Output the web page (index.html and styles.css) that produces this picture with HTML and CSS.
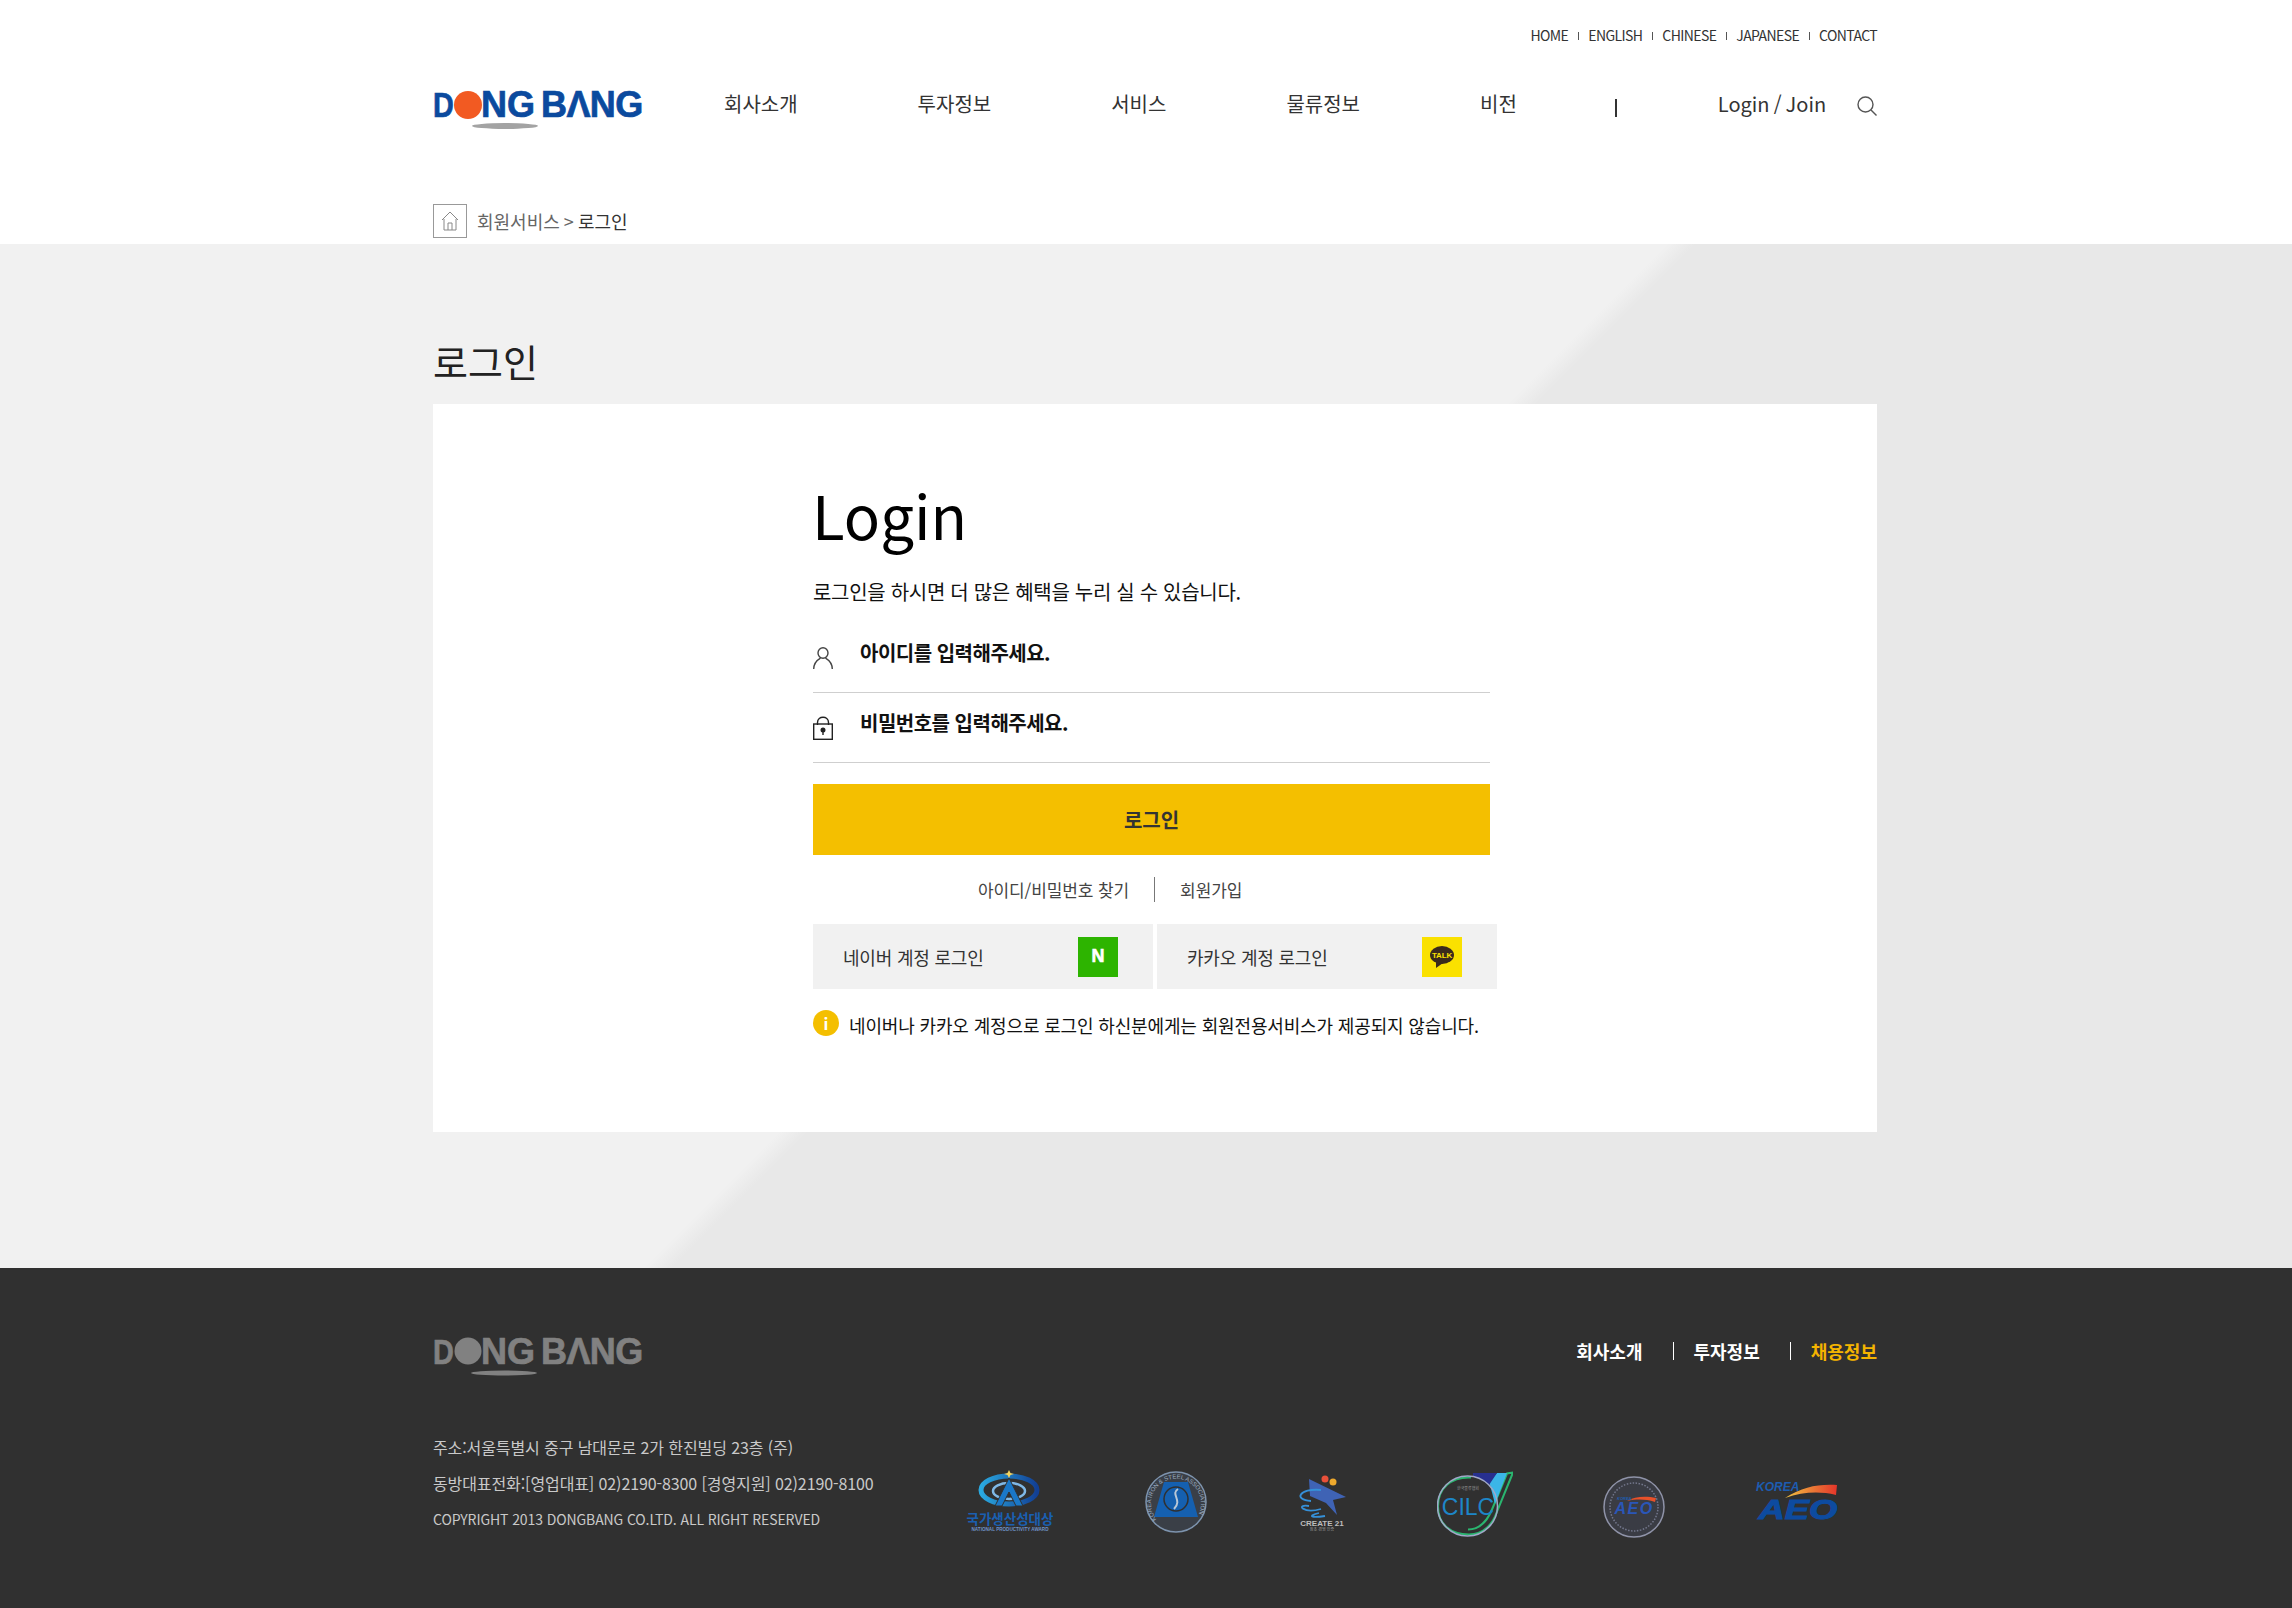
FILE: index.html
```html
<!DOCTYPE html>
<html lang="ko">
<head>
<meta charset="UTF-8">
<meta name="viewport" content="width=device-width, initial-scale=1.0">
<title>DONGBANG 로그인</title>
<link rel="stylesheet" href="styles.css">
</head>
<body>

<header class="site-header">
    <div class="wrap">
        <ul class="util-menu">
            <li>HOME</li>
            <li>ENGLISH</li>
            <li>CHINESE</li>
            <li>JAPANESE</li>
            <li>CONTACT</li>
        </ul>

        <div class="nav-row">
            <svg class="logo logo-color" width="210" height="50" viewBox="0 -10 210 50">
                <text transform="translate(0 26) scale(0.8 1)">D</text>
                <circle class="logo-dot" cx="35" cy="14" r="14"/>
                <text x="48" y="26">NG</text>
                <text x="108" y="26" letter-spacing="-0.6">BΛNG</text>
                <ellipse class="logo-shadow" cx="72" cy="35" rx="33" ry="3"/>
            </svg>

            <nav class="main-nav">
                <a href="#">회사소개</a>
                <a href="#">투자정보</a>
                <a href="#">서비스</a>
                <a href="#">물류정보</a>
                <a href="#">비전</a>
            </nav>

            <span class="nav-bar"></span>
            <a class="login-link" href="#">Login / Join</a>
            <svg class="search-icon" width="20" height="20" viewBox="0 0 20 20">
                <circle cx="8.5" cy="8.5" r="7.5"/>
                <path d="M14 14 L19.5 19.5"/>
            </svg>
        </div>

        <div class="breadcrumb">
            <span class="home-box">
                <svg width="18" height="20" viewBox="0 0 18 20">
                    <path d="M1 9 L9 1 L17 9 M3 8 V19 H15 V8 M7 19 V12 H11 V19"/>
                </svg>
            </span>
            <span class="crumb">회원서비스 &gt; </span><span class="crumb-now">로그인</span>
        </div>
    </div>
</header>

<main class="page-main">
    <div class="wrap">
        <h2 class="page-title">로그인</h2>

        <section class="login-card">
            <h1 class="login-title">Login</h1>
            <p class="login-sub">로그인을 하시면 더 많은 혜택을 누리 실 수 있습니다.</p>

            <div class="field">
                <svg class="field-icon" width="20" height="22" viewBox="0 0 20 22">
                    <ellipse cx="10" cy="6" rx="5" ry="5.2"/>
                    <path d="M0.7 22 C0.7 15 5 12.5 7.5 11 M19.3 22 C19.3 15 15 12.5 12.5 11"/>
                </svg>
                <span>아이디를 입력해주세요.</span>
            </div>
            <div class="field field-pw">
                <svg class="field-icon" width="20" height="24" viewBox="0 0 20 24">
                    <path d="M4.5 9 V6.5 C4.5 -0.5 15.5 -0.5 15.5 6.5 V9"/>
                    <rect x="0.7" y="8" width="18.6" height="15.3"/>
                    <circle class="key-dot" cx="10" cy="14" r="1.8"/>
                    <path d="M10 14 V19"/>
                </svg>
                <span>비밀번호를 입력해주세요.</span>
            </div>

            <button class="login-btn" type="button">로그인</button>

            <div class="find-links">
                <a href="#">아이디/비밀번호 찾기</a>
                <span class="find-bar"></span>
                <a href="#">회원가입</a>
            </div>

            <div class="social-row">
                <a class="social-btn" href="#">
                    <span>네이버 계정 로그인</span>
                    <span class="social-icon naver">N</span>
                </a>
                <a class="social-btn" href="#">
                    <span>카카오 계정 로그인</span>
                    <span class="social-icon kakao">
                        <svg width="24" height="22" viewBox="0 0 24 22">
                            <ellipse cx="12" cy="9" rx="12" ry="9" fill="#3a2a1c"/>
                            <path d="M6 15 L6 22 L13 17 Z" fill="#3a2a1c"/>
                            <text x="12" y="12" text-anchor="middle" class="talk">TALK</text>
                        </svg>
                    </span>
                </a>
            </div>

            <div class="notice">
                <span class="notice-icon">i</span>
                <p>네이버나 카카오 계정으로 로그인 하신분에게는 회원전용서비스가 제공되지 않습니다.</p>
            </div>
        </section>
    </div>
</main>

<footer class="site-footer">
    <div class="wrap">
        <div class="footer-top">
            <svg class="logo logo-gray" width="210" height="50" viewBox="0 -10 210 50">
                <text transform="translate(0 26) scale(0.8 1)">D</text>
                <circle class="logo-dot" cx="35" cy="13" r="13.5"/>
                <text x="48" y="26">NG</text>
                <text x="108" y="26" letter-spacing="-0.6">BΛNG</text>
                <ellipse class="logo-shadow" cx="71" cy="35" rx="33" ry="2.5"/>
            </svg>
            <ul class="footer-links">
                <li><a href="#">회사소개</a></li>
                <li><a href="#">투자정보</a></li>
                <li><a class="recruit" href="#">채용정보</a></li>
            </ul>
        </div>

        <div class="footer-bottom">
            <address class="footer-info">
                <p>주소:서울특별시 중구 남대문로 2가 한진빌딩 23층 (주)</p>
                <p>동방대표전화:[영업대표] 02)2190-8300 [경영지원] 02)2190-8100</p>
                <p class="copy">COPYRIGHT 2013 DONGBANG CO.LTD. ALL RIGHT RESERVED</p>
            </address>

            <div class="cert-row">
                <svg width="90" height="70" viewBox="0 0 90 70">
                    <defs>
                        <linearGradient id="awardBlue" x1="0" x2="1" y1="0" y2="0">
                            <stop offset="0" stop-color="#2aa9e0"/>
                            <stop offset="1" stop-color="#123f94"/>
                        </linearGradient>
                    </defs>
                    <ellipse cx="44" cy="20" rx="28" ry="14" fill="none" stroke="url(#awardBlue)" stroke-width="5"/>
                    <ellipse cx="44" cy="21" rx="16" ry="8" fill="none" stroke="#7fb8e6" stroke-width="2.5"/>
                    <path d="M44 8 L30 36 H37 L44 22 L51 36 H58 Z" fill="#1a78c8" stroke="#303030" stroke-width="1"/>
                    <path d="M44 0 L45.5 3 L49 4 L45.5 5 L44 8 L42.5 5 L39 4 L42.5 3 Z" fill="#f4d35e"/>
                    <text x="45" y="54" text-anchor="middle" class="cert-ko">국가생산성대상</text>
                    <text x="45" y="61" text-anchor="middle" class="cert-en">NATIONAL PRODUCTIVITY AWARD</text>
                </svg>

                <svg width="62" height="70" viewBox="0 0 62 70">
                    <circle cx="31" cy="32" r="30" fill="#3a3f47" stroke="#7d93ad" stroke-width="1.5"/>
                    <path d="M19 12 H43 L53 47 H9 Z" fill="#1560b0"/>
                    <circle cx="31" cy="29" r="12" fill="#1560b0" stroke="#303030" stroke-width="1.5"/>
                    <path d="M33 19 C25 24 38 30 29 39" fill="none" stroke="#b9c7d6" stroke-width="2"/>
                    <path id="certArc" d="M14 52 A25 25 0 1 1 48 52" fill="none"/>
                    <text class="cert-arc"><textPath href="#certArc" startOffset="3%">KOREA IRON &amp; STEEL ASSOCIATION</textPath></text>
                </svg>

                <svg width="50" height="70" viewBox="0 0 50 70">
                    <circle cx="28" cy="9" r="3.5" fill="#e8503a"/>
                    <circle cx="36" cy="12" r="3.5" fill="#eea92d"/>
                    <path d="M12 9 L49 27 L36 30 L40 45 L29 33 L13 26 Z" fill="#3f63b5"/>
                    <path d="M24 20 C2 18 -4 30 14 31 M12 36 C-2 34 6 44 24 39 M22 43 C10 46 14 48 28 46" fill="none" stroke="#3590d8" stroke-width="1.8"/>
                    <text x="25" y="56" text-anchor="middle" class="cert-create">CREATE 21</text>
                    <text x="25" y="61" text-anchor="middle" class="cert-tiny">창조 경영 인증</text>
                </svg>

                <svg width="76" height="70" viewBox="0 0 76 70">
                    <path d="M34 7.500 C14 6.500 1 18.500 1 36.500 C1 54.500 14 64.500 32 64.500 C47 64.500 56 53.500 60 41.500 L76 2.500 L70 3.500 L55 39.500 C50 51.500 43 59.500 31 59.500" fill="none" stroke="#2ab56f" stroke-width="2"/>
                    <path d="M60 3 H70 L58 34 C55 22 53 15 52 12 Z" fill="#3bb6e8"/>
                    <path d="M36 3 H60 L52 15 C47 10 42 7 36 7 Z" fill="#27308f"/>
                    <circle cx="30.500" cy="36" r="30" fill="none" stroke="#a0a8c8" stroke-width="1.500"/>
                    <text x="31" y="20" text-anchor="middle" class="cert-tiny">한국물류협회</text>
                    <text x="31" y="45" text-anchor="middle" class="cert-cilc">CILC</text>
                </svg>

                <svg width="62" height="70" viewBox="0 0 62 70">
                    <circle cx="31" cy="37" r="30" fill="#3a3c44" stroke="#8f93a8" stroke-width="1.5"/>
                    <circle cx="31" cy="37" r="24" fill="none" stroke="#73778c" stroke-width="1.500" stroke-dasharray="1.500 1.500"/>
                    <path d="M24 31 C32 26 44 26 53 28 L52 32 C42 29 34 29 24 31 Z" fill="#e8512a"/>
                    <text x="31" y="44" text-anchor="middle" class="cert-aeo small">AEO</text>
                    <text x="14" y="30" class="cert-korea small">KOREA</text>
                </svg>

                <svg width="86" height="70" viewBox="0 0 86 70">
                    <defs>
                        <linearGradient id="aeoSwoosh" x1="0" x2="1" y1="0" y2="0">
                            <stop offset="0" stop-color="#f2c542"/>
                            <stop offset="1" stop-color="#e4352a"/>
                        </linearGradient>
                    </defs>
                    <path d="M30 28 C48 17 62 14 82 15 L81 25 C64 21 48 22 30 28 Z" fill="url(#aeoSwoosh)"/>
                    <text x="1" y="21" class="cert-korea">KOREA</text>
                    <text transform="translate(43 49) scale(1.3 1)" text-anchor="middle" class="cert-aeo">AEO</text>
                </svg>
            </div>
        </div>
    </div>
</footer>

</body>
</html>
```

FILE: styles.css
```css
* {
    box-sizing: border-box;
}

html, body {
    margin: 0;
    padding: 0;
}

body {
    font-family: "Noto Sans CJK KR", "Noto Sans", sans-serif;
    color: #333;
    background-color: #fff;
}

a {
    color: inherit;
    text-decoration: none;
}

ul {
    list-style-type: none;
    margin: 0;
    padding: 0;
}

p {
    margin: 0;
}

svg {
    display: block;
}

.wrap {
    width: 1444px;
    margin-left: 433px;
}

/* header */
.site-header {
    height: 244px;
}

.util-menu {
    display: flex;
    justify-content: flex-end;
    align-items: center;
    padding-top: 24px;
    height: 46px;
    font-size: 14px;
    line-height: 22px;
    letter-spacing: -0.6px;
    color: #333;
}

.util-menu li + li {
    margin-left: 10px;
    padding-left: 10px;
    background: linear-gradient(#555, #555) left 8px / 1px 8px no-repeat;
}

.nav-row {
    display: flex;
    align-items: flex-start;
    height: 158px;
    padding-top: 45px;
}

.logo {
    margin-top: -10px;
}

.logo text {
    font-family: "Liberation Sans", sans-serif;
    font-weight: 700;
    font-size: 36px;
    stroke-width: 0.7;
}

.logo-color text {
    fill: #0b4a9e;
    stroke: #0b4a9e;
}

.logo-color .logo-dot {
    fill: #f25a22;
}

.logo-color .logo-shadow {
    fill: #a3a3a3;
}

.logo-gray text {
    stroke: #818181;
}

.logo-gray text,
.logo-gray .logo-dot,
.logo-gray .logo-shadow {
    fill: #818181;
}

.main-nav {
    display: flex;
    gap: 120px;
    margin-left: 81px;
    margin-top: -2px;
    font-size: 20px;
    line-height: 30px;
    color: #333;
}

.nav-bar {
    width: 2px;
    height: 18px;
    margin: 8px 0 0 98px;
    background-color: #333;
}

.login-link {
    margin-left: 101px;
    margin-top: -2px;
    font-size: 20px;
    line-height: 30px;
    word-spacing: -1.5px;
    color: #333;
}

.search-icon {
    margin: 5px 0 0 auto;
    fill: none;
    stroke: #555;
    stroke-width: 1.4;
}

.breadcrumb {
    display: flex;
    align-items: center;
    font-size: 18px;
    white-space: pre;
    word-spacing: -1px;
}

.home-box {
    display: flex;
    align-items: center;
    justify-content: center;
    width: 34px;
    height: 34px;
    margin-right: 10px;
    border: 1px solid #999;
}

.home-box svg {
    fill: none;
    stroke: #888;
    stroke-width: 1;
}

.crumb {
    color: #666;
}

.crumb-now {
    color: #333;
}

/* main */
.page-main {
    padding-bottom: 136px;
    background: linear-gradient(135deg, #f1f1f1 1179px, #e8e8e8 1199px);
}

.page-title {
    margin: 0;
    padding-top: 87px;
    height: 160px;
    font-size: 38px;
    line-height: 60px;
    font-weight: 400;
    color: #222;
}

.login-card {
    height: 728px;
    padding: 70px 0 0 380px;
    background-color: #fff;
    color: #111;
}

.login-title {
    margin: 0;
    margin-left: -1px;
    font-size: 60px;
    line-height: 80px;
    font-weight: 400;
    color: #000;
}

.login-sub {
    margin-top: 23px;
    font-size: 20px;
    line-height: 30px;
    letter-spacing: -0.3px;
}

.field {
    display: flex;
    align-items: flex-start;
    gap: 27px;
    width: 677px;
    height: 70px;
    margin-top: 16px;
    padding-top: 15px;
    border-bottom: 1px solid #cfcfcf;
    font-size: 20px;
    line-height: 30px;
    font-weight: 700;
    letter-spacing: -0.5px;
}

.field-pw {
    margin-top: 0;
}

.field-icon {
    margin-top: 9px;
    fill: none;
    stroke: #444;
    stroke-width: 1.4;
}

.field-pw .field-icon {
    stroke: #222;
    margin-top: 8px;
}

.key-dot {
    fill: #222;
}

.login-btn {
    display: block;
    width: 677px;
    height: 71px;
    margin-top: 21px;
    border: 0;
    background-color: #f4bf00;
    font-family: inherit;
    font-size: 20px;
    font-weight: 700;
    color: #333;
}

.find-links {
    display: flex;
    align-items: center;
    gap: 25px;
    width: 677px;
    height: 25px;
    margin-top: 22px;
    padding-left: 165px;
    font-size: 17px;
    letter-spacing: -0.1px;
    color: #444;
}

.find-bar {
    width: 1px;
    height: 25px;
    background-color: #777;
}

.social-row {
    display: flex;
    gap: 4px;
    margin-top: 22px;
}

.social-btn {
    display: flex;
    justify-content: space-between;
    align-items: center;
    width: 340px;
    height: 65px;
    padding: 0 35px 0 30px;
    background-color: #f1f1f1;
    font-size: 18px;
    letter-spacing: -0.2px;
    color: #333;
}

.social-icon {
    display: flex;
    align-items: center;
    justify-content: center;
    width: 40px;
    height: 40px;
}

.naver {
    background-color: #2db400;
    color: #fff;
    font-family: "Liberation Sans", sans-serif;
    font-size: 18px;
    font-weight: 700;
    -webkit-text-stroke: 0.6px #fff;
}

.kakao {
    background-color: #fae100;
}

.talk {
    font-family: "Liberation Sans", sans-serif;
    font-size: 8px;
    font-weight: 700;
    fill: #fae100;
}

.notice {
    display: flex;
    align-items: flex-start;
    gap: 10px;
    margin-top: 21px;
}

.notice-icon {
    width: 26px;
    height: 26px;
    border-radius: 50%;
    background-color: #f4bf00;
    color: #fff;
    font-size: 16px;
    line-height: 26px;
    font-weight: 700;
    text-align: center;
}

.notice p {
    font-size: 18px;
    line-height: 30px;
    letter-spacing: -0.15px;
    color: #111;
}

/* footer */
.site-footer {
    height: 340px;
    padding-top: 70px;
    background-color: #303030;
}

.footer-top {
    display: flex;
    justify-content: space-between;
    align-items: flex-start;
    height: 91px;
}

.footer-links {
    display: flex;
    margin-top: -1px;
    font-size: 18px;
    line-height: 28px;
    font-weight: 700;
    color: #fff;
}

.footer-links li + li {
    margin-left: 30px;
    padding-left: 21px;
    background: linear-gradient(#fff, #fff) left 5px / 1px 18px no-repeat;
}

.recruit {
    color: #f4b400;
}

.footer-bottom {
    display: flex;
    align-items: flex-start;
}

.footer-info {
    width: 532px;
    font-style: normal;
    font-size: 16px;
    line-height: 36px;
    letter-spacing: -0.1px;
    color: #c9c9c9;
}

.footer-info .copy {
    font-size: 14px;
}

.cert-row {
    display: flex;
    gap: 90px;
    margin-top: 41px;
}

.cert-ko {
    font-size: 13.5px;
    font-weight: 700;
    fill: #1a5fb0;
}

.cert-en {
    font-family: "Liberation Sans", sans-serif;
    font-size: 4.6px;
    font-weight: 700;
    fill: #6f93c8;
}

.cert-arc {
    font-family: "Liberation Sans", sans-serif;
    font-size: 6px;
    fill: #9fb0c2;
}

.cert-create {
    font-family: "Liberation Sans", sans-serif;
    font-size: 8px;
    font-weight: 700;
    fill: #bdbdbd;
}

.cert-tiny {
    font-size: 4px;
    fill: #9a9a9a;
}

.cert-cilc {
    font-family: "Liberation Sans", sans-serif;
    font-size: 23px;
    fill: #1d86c8;
}

.cert-aeo {
    font-family: "Liberation Sans", sans-serif;
    font-size: 28px;
    font-weight: 700;
    font-style: italic;
    fill: #0d4ba0;
    stroke: #0d4ba0;
    stroke-width: 1;
}

.cert-aeo.small {
    font-size: 16px;
    letter-spacing: 1.5px;
    fill: #2a56b8;
    stroke-width: 0;
}

.cert-korea {
    font-family: "Liberation Sans", sans-serif;
    font-size: 12px;
    font-weight: 700;
    font-style: italic;
    fill: #1d5cb0;
}

.cert-korea.small {
    font-size: 4px;
}
```
